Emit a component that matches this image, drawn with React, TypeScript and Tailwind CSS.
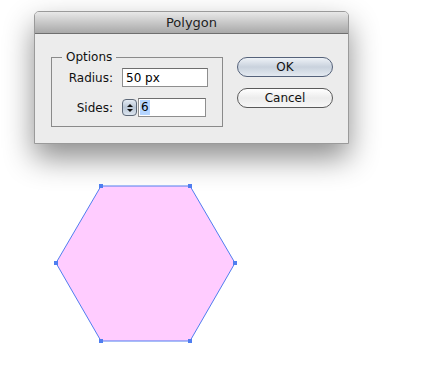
import React from 'react';

const FONT = { fontFamily: '"DejaVu Sans", "Lucida Grande", sans-serif' };

function Stepper() {
  return (
    <div className="w-[15px] h-[17px] mr-[1px] rounded-[4px] border border-[#5d6877] bg-gradient-to-b from-[#e4ebf3] via-[#b9c6d5] to-[#dce5ef] flex flex-col items-center justify-center gap-[2px]">
      <svg width="6" height="3" viewBox="0 0 6 3"><path d="M3 0L6 3H0z" fill="#111" /></svg>
      <svg width="6" height="3" viewBox="0 0 6 3"><path d="M0 0H6L3 3z" fill="#111" /></svg>
    </div>
  );
}

function Hexagon() {
  const pts: [number, number][] = [
    [51, 7],
    [140, 7],
    [185, 84],
    [140, 162],
    [51, 162],
    [6, 84],
  ];
  return (
    <svg width="200" height="170" viewBox="0 0 200 170">
      <polygon
        points={pts.map((p) => p.join(',')).join(' ')}
        fill="#ffccff"
        stroke="#4f7ef0"
        strokeWidth="1"
      />
      {pts.map(([x, y], i) => (
        <rect key={i} x={x - 2} y={y - 2} width="4" height="4" fill="#4f7ef0" />
      ))}
    </svg>
  );
}

export default function App() {
  return (
    <div className="w-[426px] h-[366px] bg-white overflow-hidden pt-[11px] pl-[34px]" style={FONT}>
      <div className="w-[315px] h-[133px] flex flex-col rounded-t-[5px] border border-[#9a9a9a] bg-[#ececec] shadow-[0_14px_30px_rgba(0,0,0,0.45)]">
        <div className="h-[22px] shrink-0 rounded-t-[4px] border-b border-[#6f6f6f] bg-gradient-to-b from-[#e8e8e8] to-[#a9a9a9] flex items-center justify-center text-[13px] text-[#222]">
          Polygon
        </div>
        <div className="flex pt-[16px] pl-[16px] gap-[14px]">
          <fieldset className="w-[172px] h-[77px] border border-[#8a8a8a] px-[0px] pb-[8px] pt-[2px]">
            <legend className="ml-[10px] px-[4px] text-[12px] text-[#111] leading-[14px]">Options</legend>
            <div className="flex flex-col gap-[11px] mt-[2px]">
              <div className="flex items-center">
                <span className="w-[61px] text-right text-[12px] text-[#111]">Radius:</span>
                <input
                  readOnly
                  value="50 px"
                  className="ml-[9px] w-[86px] h-[19px] border border-[#8e8e8e] border-t-[#6e6e6e] bg-white px-[3px] text-[12px] text-black outline-none"
                  style={FONT}
                />
              </div>
              <div className="flex items-center">
                <span className="w-[61px] text-right text-[12px] text-[#111]">Sides:</span>
                <div className="ml-[9px] flex items-center">
                  <Stepper />
                  <div className="w-[68px] h-[19px] border border-[#8e8e8e] border-t-[#6e6e6e] bg-white flex items-center pl-[1px] text-[12px] text-black">
                    <span className="bg-[#b5d5ff] px-[1px] leading-[15px]">6</span>
                  </div>
                </div>
              </div>
            </div>
          </fieldset>
          <div className="flex flex-col gap-[11px] pt-[7px]">
            <div className="w-[96px] h-[20px] rounded-full border border-[#55627a] bg-gradient-to-b from-[#eef2f7] via-[#c9d2dd] to-[#e4eaf1] flex items-center justify-center text-[12px] text-[#111]">
              OK
            </div>
            <div className="w-[96px] h-[20px] rounded-full border border-[#5a5a5a] bg-gradient-to-b from-white via-[#ececec] to-[#f7f7f7] flex items-center justify-center text-[12px] text-[#111]">
              Cancel
            </div>
          </div>
        </div>
      </div>
      <div className="mt-[35px] ml-[16px]">
        <Hexagon />
      </div>
    </div>
  );
}
